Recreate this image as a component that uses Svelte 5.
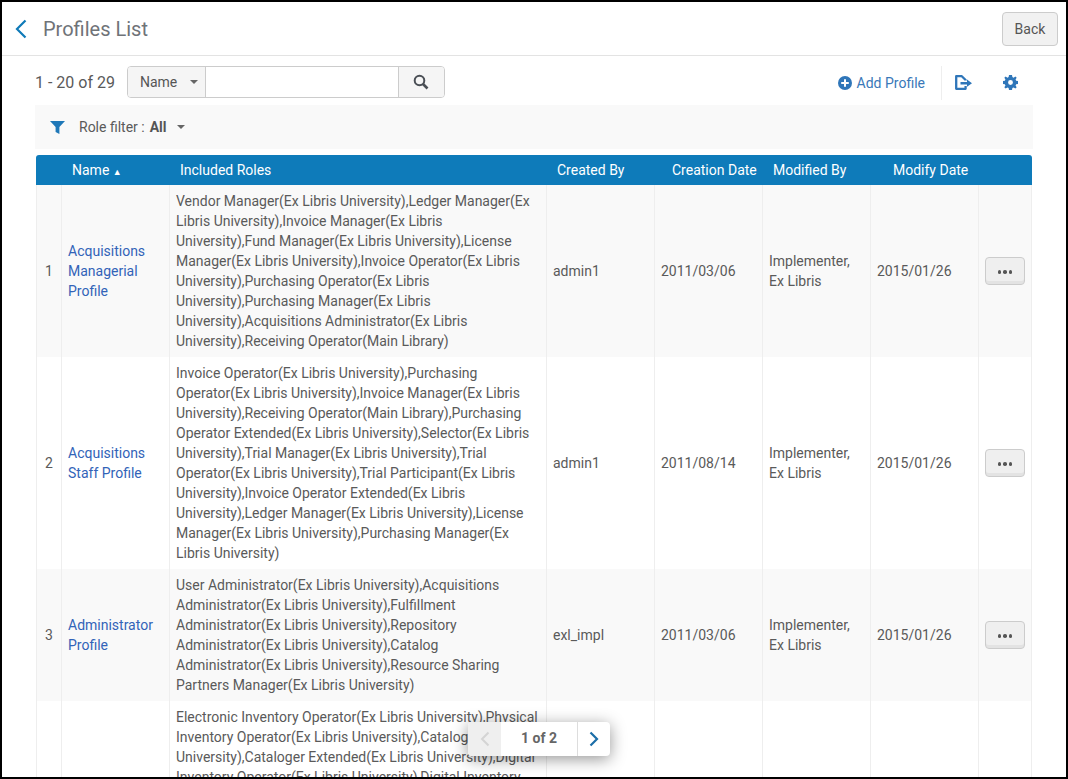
<script>
    const rows = [
        {
            n: 1,
            name: 'Acquisitions Managerial Profile',
            roles: 'Vendor Manager(Ex Libris University),Ledger Manager(Ex Libris University),Invoice Manager(Ex Libris University),Fund Manager(Ex Libris University),License Manager(Ex Libris University),Invoice Operator(Ex Libris University),Purchasing Operator(Ex Libris University),Purchasing Manager(Ex Libris University),Acquisitions Administrator(Ex Libris University),Receiving Operator(Main Library)',
            by: 'admin1',
            date: '2011/03/06',
            modBy: 'Implementer, Ex Libris',
            modDate: '2015/01/26'
        },
        {
            n: 2,
            name: 'Acquisitions Staff Profile',
            roles: 'Invoice Operator(Ex Libris University),Purchasing Operator(Ex Libris University),Invoice Manager(Ex Libris University),Receiving Operator(Main Library),Purchasing Operator Extended(Ex Libris University),Selector(Ex Libris University),Trial Manager(Ex Libris University),Trial Operator(Ex Libris University),Trial Participant(Ex Libris University),Invoice Operator Extended(Ex Libris University),Ledger Manager(Ex Libris University),License Manager(Ex Libris University),Purchasing Manager(Ex Libris University)',
            by: 'admin1',
            date: '2011/08/14',
            modBy: 'Implementer, Ex Libris',
            modDate: '2015/01/26'
        },
        {
            n: 3,
            name: 'Administrator Profile',
            roles: 'User Administrator(Ex Libris University),Acquisitions Administrator(Ex Libris University),Fulfillment Administrator(Ex Libris University),Repository Administrator(Ex Libris University),Catalog Administrator(Ex Libris University),Resource Sharing Partners Manager(Ex Libris University)',
            by: 'exl_impl',
            date: '2011/03/06',
            modBy: 'Implementer, Ex Libris',
            modDate: '2015/01/26'
        }
    ];
</script>

<div class="frame">
    <header class="top">
        <svg class="back-arrow" width="14" height="20" viewBox="0 0 14 20" aria-hidden="true">
            <path d="M11.5 1.5 L3 10 L11.5 18.5" fill="none" stroke="#0f7ab8" stroke-width="2.2" />
        </svg>
        <h1>Profiles List</h1>
        <button class="back" type="button">Back</button>
    </header>

    <div class="toolbar">
        <span class="count">1 - 20 of 29</span>
        <div class="search">
            <button class="scope" type="button">Name <i class="caret"></i></button>
            <input type="text" aria-label="Search" />
            <button class="go" type="button" aria-label="Search">
                <svg width="16" height="16" viewBox="0 0 16 16" aria-hidden="true">
                    <circle cx="6.5" cy="6.5" r="4.8" fill="none" stroke="#4a4f55" stroke-width="2" />
                    <path d="M10 10 L14.5 14.5" stroke="#4a4f55" stroke-width="2.6" />
                </svg>
            </button>
        </div>
        <div class="actions">
            <a class="add" href="#add">
                <svg width="14" height="14" viewBox="0 0 14 14" aria-hidden="true">
                    <circle cx="7" cy="7" r="7" fill="#2f76b9" />
                    <path d="M7 3.2 V10.8 M3.2 7 H10.8" stroke="#fff" stroke-width="2" />
                </svg>
                Add Profile
            </a>
            <span class="sep"></span>
            <svg class="export" width="17" height="15" viewBox="0 0 17 15" aria-hidden="true">
                <path d="M10.6 5.6 V5 L6.8 1.2 H1.2 V13.8 H10.6 V11" fill="none" stroke="#2f76b9" stroke-width="2.3" stroke-linejoin="round" />
                <path d="M5.5 7 H12 V4.6 L17 8.2 L12 11.8 V9.4 H5.5 Z" fill="#2f76b9" />
            </svg>
            <svg class="gear" width="15" height="15" viewBox="0 0 16 16" aria-hidden="true">
                <path fill="#2f76b9" fill-rule="evenodd" d="M6.4 0 H9.6 L10 2.2 L11.3 2.8 L13.2 1.5 L14.6 3 L13.4 4.9 L14 6.2 L16 6.5 V9.5 L14 9.9 L13.4 11.2 L14.6 13 L13.2 14.5 L11.3 13.3 L10 13.8 L9.6 16 H6.4 L6 13.8 L4.7 13.3 L2.8 14.5 L1.4 13 L2.6 11.2 L2 9.9 L0 9.5 V6.5 L2 6.2 L2.6 4.9 L1.4 3 L2.8 1.5 L4.7 2.8 L6 2.2 Z M8 5.4 A2.6 2.6 0 1 0 8 10.6 A2.6 2.6 0 1 0 8 5.4 Z" />
            </svg>
        </div>
    </div>

    <div class="filter">
        <svg width="15" height="13" viewBox="0 0 15 13" aria-hidden="true">
            <path d="M0 0 H15 L9.4 6 V13 L5.6 11 V6 Z" fill="#1f78b8" />
        </svg>
        <span class="filter-label">Role filter :</span>
        <b>All</b>
        <i class="caret"></i>
    </div>

    <table>
        <colgroup>
            <col class="c-n" /><col class="c-name" /><col class="c-roles" /><col class="c-std" />
            <col class="c-std" /><col class="c-std" /><col class="c-std" /><col />
        </colgroup>
        <thead>
            <tr>
                <th></th>
                <th>Name <span class="sort">▲</span></th>
                <th>Included Roles</th>
                <th>Created By</th>
                <th class="h-created">Creation Date</th>
                <th class="h-modified">Modified By</th>
                <th class="h-date">Modify Date</th>
                <th></th>
            </tr>
        </thead>
        <tbody>
            {#each rows as row}
                <tr>
                    <td class="num">{row.n}</td>
                    <td><a href="#profile">{row.name}</a></td>
                    <td>{row.roles}</td>
                    <td>{row.by}</td>
                    <td>{row.date}</td>
                    <td>{row.modBy}</td>
                    <td>{row.modDate}</td>
                    <td class="more"><button type="button" aria-label="More"><span></span><span></span><span></span></button></td>
                </tr>
            {/each}
            <tr>
                <td class="num"></td>
                <td></td>
                <td>Electronic Inventory Operator(Ex Libris University),Physical Inventory Operator(Ex Libris University),Cataloger(Ex Libris University),Cataloger Extended(Ex Libris University),Digital Inventory Operator(Ex Libris University),Digital Inventory Operator Extended(Ex Libris University)</td>
                <td></td>
                <td></td>
                <td></td>
                <td></td>
                <td></td>
            </tr>
        </tbody>
    </table>

    <div class="pager">
        <button class="prev" type="button" aria-label="Previous">
            <svg width="10" height="16" viewBox="0 0 10 16" aria-hidden="true"><path d="M8.5 1.5 L2 8 L8.5 14.5" fill="none" stroke="#d4d4d4" stroke-width="2" /></svg>
        </button>
        <span class="page">1 of 2</span>
        <button class="next" type="button" aria-label="Next">
            <svg width="10" height="16" viewBox="0 0 10 16" aria-hidden="true"><path d="M1.5 1.5 L8 8 L1.5 14.5" fill="none" stroke="#1c6ea8" stroke-width="2.2" /></svg>
        </button>
    </div>
</div>

<style>
    :global(body) {
        margin: 0;
        overflow: hidden;
        background: #fff;
    }

    .frame {
        position: relative;
        box-sizing: border-box;
        height: 779px;
        overflow: hidden;
        border: 2px solid #000;
        font-family: Roboto, "Liberation Sans", sans-serif;
        font-size: 14px;
        line-height: 20px;
        color: #5a5a5a;
    }

    .top {
        display: flex;
        align-items: center;
        box-sizing: border-box;
        height: 54px;
        padding: 0 8px 0 12px;
        border-bottom: 1px solid #e3e3e3;
    }

    .back-arrow {
        margin-right: 15px;
    }

    h1 {
        margin: 0;
        font-size: 20px;
        font-weight: 400;
        color: #6f7378;
    }

    .back {
        margin-left: auto;
        width: 56px;
        height: 34px;
        font: inherit;
        color: #555;
        background: #f1f1f1;
        border: 1px solid #ccc;
        border-radius: 4px;
    }

    .toolbar {
        display: flex;
        align-items: center;
        height: 49px;
        padding: 0 33px;
    }

    .count {
        font-size: 16px;
        margin-right: 12px;
        margin-top: 4px;
    }

    .search {
        display: flex;
        height: 32px;
        box-sizing: border-box;
        border: 1px solid #ccc;
        border-radius: 4px;
        margin-top: 2px;
    }

    .scope {
        display: flex;
        align-items: center;
        gap: 13px;
        width: 78px;
        padding: 0 0 0 12px;
        font: inherit;
        color: #555;
        background: #f5f5f5;
        border: 0;
        border-right: 1px solid #ccc;
        border-radius: 3px 0 0 3px;
    }

    .caret {
        display: inline-block;
        width: 0;
        height: 0;
        border-left: 4px solid transparent;
        border-right: 4px solid transparent;
        border-top: 4px solid #666;
    }

    input {
        width: 192px;
        border: 0;
        padding: 0;
        outline: none;
    }

    .go {
        display: flex;
        align-items: center;
        justify-content: center;
        width: 46px;
        padding: 1px 0 0;
        background: #f5f5f5;
        border: 0;
        border-left: 1px solid #ccc;
        border-radius: 0 3px 3px 0;
    }

    .actions {
        display: flex;
        align-items: center;
        margin-left: auto;
        margin-right: 15px;
        margin-top: 4px;
        height: 34px;
    }

    .add {
        display: flex;
        align-items: center;
        gap: 5px;
        color: #3a78b8;
        text-decoration: none;
    }

    .sep {
        width: 1px;
        height: 34px;
        margin: 0 13px 0 16px;
        background: #eee;
    }

    .gear {
        margin-left: 31px;
    }

    .filter {
        display: flex;
        align-items: center;
        box-sizing: border-box;
        height: 44px;
        margin: 0 33px;
        padding: 0 15px;
        background: #f9f9f9;
    }

    .filter-label {
        margin-left: 14px;
        margin-right: 5px;
    }

    .filter b {
        color: #555;
        margin-right: 10px;
    }

    table {
        table-layout: fixed;
        width: 996px;
        margin: 6px 0 0 34px;
        border-collapse: separate;
        border-spacing: 0;
    }

    .c-n { width: 26px; }
    .c-name { width: 108px; }
    .c-roles { width: 377px; }
    .c-std { width: 108px; }

    th {
        height: 30px;
        padding: 0 0 0 10px;
        box-sizing: border-box;
        text-align: left;
        font-weight: 400;
        color: #fff;
        background: #0e7bba;
        white-space: nowrap;
    }

    th:first-child { border-top-left-radius: 3px; }
    th:last-child { border-top-right-radius: 3px; }

    .h-created { padding-left: 17px; }
    .h-modified { padding-left: 10px; }
    .h-date { padding-left: 22px; }

    .sort {
        font-size: 9px;
        line-height: 1;
    }

    td {
        padding: 6px;
        border-right: 1px solid #eee;
        vertical-align: middle;
    }

    td:first-child {
        border-left: 1px solid #eee;
    }

    tbody tr:nth-child(odd) td {
        background: #f9f9f9;
    }

    .num {
        padding: 6px 0 6px 8px;
    }

    td a {
        color: #3263b8;
        text-decoration: none;
    }

    .more button {
        display: flex;
        align-items: center;
        justify-content: center;
        gap: 2px;
        width: 40px;
        height: 28px;
        padding: 2px 0 0;
        background: #efefef;
        border: 1px solid #ccc;
        border-radius: 4px;
        box-shadow: inset 0 -3px 0 #e3e3e3;
    }

    .more span {
        width: 3.5px;
        height: 3.5px;
        border-radius: 50%;
        background: #555;
    }

    .pager {
        position: absolute;
        left: 466px;
        top: 720px;
        display: flex;
        height: 34px;
        background: #fff;
        border-radius: 4px;
        box-shadow: 0 3px 16px rgba(0, 0, 0, 0.42);
    }

    .pager button {
        display: flex;
        align-items: center;
        justify-content: center;
        padding: 0;
        border: 0;
        background: none;
    }

    .prev {
        width: 33px;
        background: #efefef !important;
        border-radius: 4px 0 0 4px !important;
    }

    .page {
        width: 76px;
        line-height: 32px;
        text-align: center;
        font-weight: 700;
        color: #666;
        border-right: 1px solid #ddd;
    }

    .next {
        width: 32px;
    }
</style>
